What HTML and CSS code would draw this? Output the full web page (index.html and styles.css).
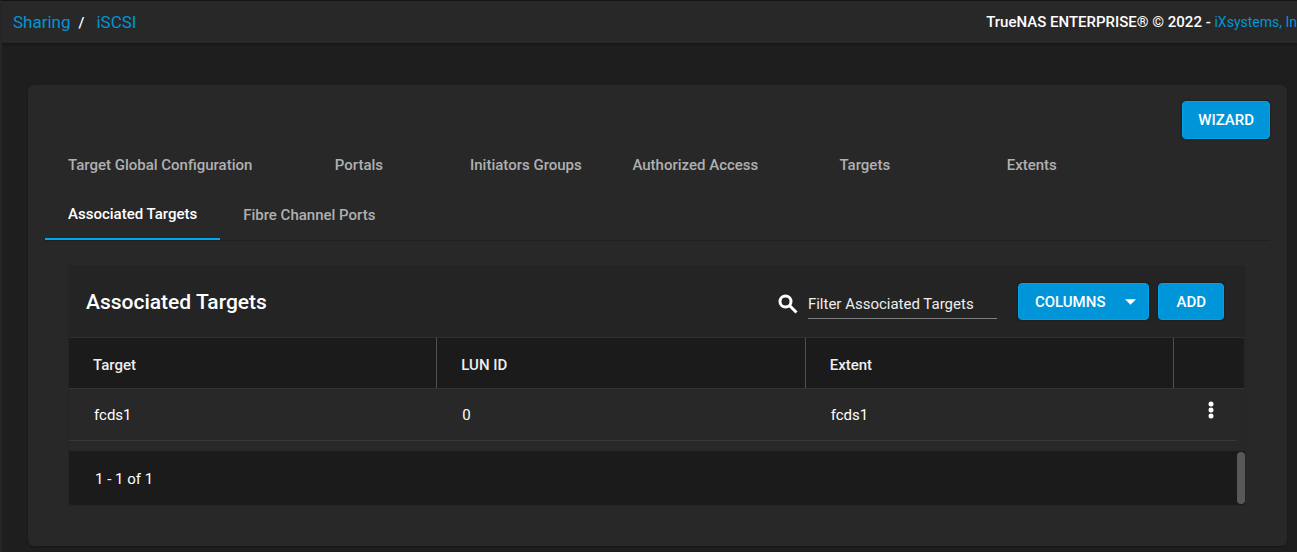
FILE: index.html
```html
<!DOCTYPE html>
<html lang="en">
<head>
<meta charset="utf-8">
<title>Sharing / iSCSI</title>
<link rel="stylesheet" href="styles.css">
</head>
<body>
<header class="topbar">
  <nav class="breadcrumb" aria-label="Breadcrumb">
    <a href="#">Sharing</a><span class="slash">/</span><a href="#">iSCSI</a>
  </nav>
  <div class="copyright">TrueNAS ENTERPRISE® © 2022 - <a href="#">iXsystems, In</a></div>
</header>
<main class="page">
  <section class="card">
    <div class="card-actions"><button class="btn wizard" type="button">WIZARD</button></div>
    <nav class="tabs" aria-label="iSCSI sections">
      <a class="tab" href="#">Target Global Configuration</a>
      <a class="tab" href="#">Portals</a>
      <a class="tab" href="#">Initiators Groups</a>
      <a class="tab" href="#">Authorized Access</a>
      <a class="tab" href="#">Targets</a>
      <a class="tab last" href="#">Extents</a>
      <a class="tab active" href="#" aria-current="page">Associated Targets</a>
      <a class="tab" href="#">Fibre Channel Ports</a>
    </nav>
    <section class="panel">
      <div class="toolbar">
        <h1 class="title">Associated Targets</h1>
        <label class="filter">
          <svg class="search" viewBox="0 0 20 20" aria-hidden="true"><circle cx="7.500" cy="7.500" r="5.500"/><path d="M11.500 11.500L18.500 18.500"/></svg>
          <input type="text" placeholder="Filter Associated Targets" aria-label="Filter Associated Targets">
        </label>
        <div class="buttons">
          <button class="btn columns" type="button">COLUMNS<svg class="caret" viewBox="0 0 10 5" aria-hidden="true"><path d="M0 0h10L5 5z"/></svg></button>
          <button class="btn add" type="button">ADD</button>
        </div>
      </div>
      <table class="grid">
        <thead>
          <tr><th>Target</th><th>LUN ID</th><th>Extent</th><th class="menu-col"></th></tr>
        </thead>
        <tbody>
          <tr><td>fcds1</td><td>0</td><td>fcds1</td>
            <td class="menu-cell"><button class="more" type="button" aria-label="Row actions"><svg viewBox="0 0 6 18" aria-hidden="true"><circle cx="3" cy="3" r="2.500"/><circle cx="3" cy="9" r="2.500"/><circle cx="3" cy="15" r="2.500"/></svg></button></td></tr>
        </tbody>
      </table>
      <div class="row-end"></div>
      <div class="footer"><span class="count">1 - 1 of 1</span><span class="scroll-thumb"></span></div>
    </section>
  </section>
</main>
</body>
</html>
```
FILE: styles.css
```css
* { box-sizing: border-box; }

body {
  margin: 0;
  min-height: 100vh;
  background: #1e1e1e;
  border-top: 1px solid #141414;
  border-left: 2px solid #262626;
  color: #fff;
  font: 15px/20px Roboto, sans-serif;
  overflow-x: hidden;
}

a { color: #0095d5; text-decoration: none; }
button, input { font: inherit; color: inherit; }

.topbar {
  display: flex;
  align-items: center;
  justify-content: space-between;
  height: 42px;
  padding: 0 0 0 11px;
  background: #282828;
  box-shadow: 0 1px 2px #141414;
}

.breadcrumb { display: flex; padding-top: 1px; font-size: 17px; }
.slash { padding: 0 12px 0 8px; font-size: 15px; font-weight: 500; line-height: 22px; }
.copyright { flex: none; font-weight: 500; white-space: nowrap; }
.copyright a { font-size: 14px; font-weight: 400; }

.page { padding: 42px 10px 6px 26px; }

.card {
  padding: 16px 17px 41px;
  border-radius: 6px;
  background: #282828;
  box-shadow: 0 1px 2px #161616;
}

.card-actions { display: flex; justify-content: flex-end; }

.btn {
  display: flex;
  align-items: center;
  justify-content: center;
  height: 37px;
  padding: 0 17px;
  border: 1px solid #00a2e8;
  border-radius: 4px;
  background: #0095d9;
  font-weight: 500;
  box-shadow: 0 0 2px #161616;
}
.wizard { height: 38px; padding: 0 15px; }

.tabs {
  display: flex;
  flex-wrap: wrap;
  margin-top: 1px;
  border-bottom: 1px solid #202020;
}
.tab {
  min-width: 167px;
  height: 50px;
  padding: 0 23px;
  border-bottom: 2px solid transparent;
  color: #b0b0b0;
  font-weight: 500;
  line-height: 50px;
  text-align: center;
}
.last { margin-right: 80px; }
.active { border-color: #00a8f0; color: #fff; line-height: 48px; }

.panel {
  margin: 25px 25px 0 24px;
  background: #242424;
  box-shadow: 0 0 1px #181818;
}

.toolbar {
  display: flex;
  align-items: center;
  height: 71px;
  padding: 0 21px 0 17px;
}
.title { margin: 0 auto 0 0; font-size: 21px; font-weight: 500; line-height: 28px; }

.filter { display: flex; align-items: center; gap: 10px; margin-right: 21px; padding-top: 5px; }
.search { width: 20px; height: 20px; fill: none; stroke: #fff; stroke-width: 3; }
.filter input {
  width: 189px;
  height: 29px;
  padding: 0;
  border: 0;
  border-bottom: 1px solid #808080;
  background: none;
  outline: none;
}
.filter input::placeholder { color: #eee; opacity: 1; }

.buttons { display: flex; gap: 9px; }
.columns { gap: 20px; padding: 0 12px 0 16px; }
.caret { width: 11px; height: 6px; fill: #fff; }

.grid { width: 100%; border-spacing: 0; table-layout: fixed; text-align: left; }
.grid th {
  height: 52px;
  padding: 4px 24px 0;
  border-top: 1px solid #303030;
  border-right: 1px solid #505050;
  border-bottom: 1px solid #333;
  background: #1b1b1b;
  color: #eee;
  font-weight: 500;
}
.grid .menu-col { width: 71px; border-right-color: #282828; }
.grid td { height: 51px; padding: 0 25px; background: #282828; }
.grid .menu-cell { padding: 0 30px 10px 34px; }
.more { display: flex; padding: 0; border: 0; background: none; }
.more svg { width: 6px; height: 18px; fill: #fff; }

.row-end { height: 11px; background: linear-gradient(#383838, #383838) left top / calc(100% - 8px) 1px no-repeat #282828; }

.footer {
  display: flex;
  align-items: center;
  justify-content: space-between;
  height: 54px;
  padding-left: 26px;
  border-radius: 0 0 4px 4px;
  background: #1b1b1b;
}
.count { padding-top: 2px; }
.scroll-thumb { width: 8px; height: 52px; border-radius: 4px; background: #585858; }
```
